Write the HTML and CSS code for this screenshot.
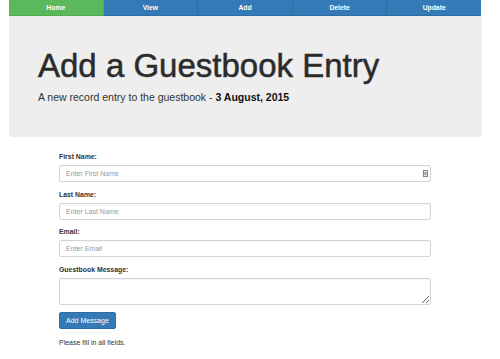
FILE: index.html
```html
<!DOCTYPE html>
<html lang="en">
<head>
<meta charset="utf-8">
<title>Add a Guestbook Entry</title>
<link rel="stylesheet" href="styles.css">
</head>
<body>
<div class="page">
  <nav class="nav">
    <a class="nav-item active" href="#">Home</a>
    <a class="nav-item" href="#">View</a>
    <a class="nav-item" href="#">Add</a>
    <a class="nav-item" href="#">Delete</a>
    <a class="nav-item" href="#">Update</a>
  </nav>
  <header class="jumbotron">
    <h1 class="title">Add a Guestbook Entry</h1>
    <p class="lead">A new record entry to the guestbook - <strong>3 August, 2015</strong></p>
  </header>
</div>
<form class="form">
  <div class="group">
    <label class="label">First Name:</label>
    <div class="field-wrap">
      <input class="field" type="text" placeholder="Enter First Name">
      <svg class="field-icon" width="5" height="7" viewBox="0 0 5 7"><rect x="0.5" y="0.5" width="4" height="6" fill="#e6e6e6" stroke="#888" stroke-width="1"/><rect x="1.5" y="2" width="2" height="3" fill="#999"/></svg>
    </div>
  </div>
  <div class="group">
    <label class="label">Last Name:</label>
    <input class="field" type="text" placeholder="Enter Last Name">
  </div>
  <div class="group">
    <label class="label">Email:</label>
    <input class="field" type="text" placeholder="Enter Email">
  </div>
  <div class="group">
    <label class="label">Guestbook Message:</label>
    <textarea class="field area"></textarea>
  </div>
  <button class="btn" type="button">Add Message</button>
  <p class="note">Please fill in all fields.</p>
</form>
</body>
</html>
```
FILE: styles.css
```css
* { box-sizing: border-box; }
html, body { margin: 0; padding: 0; background: #fff; }
body {
  font-family: "Liberation Sans", Arial, Helvetica, sans-serif;
  color: #333;
}
.page {
  padding: 0 18px 0 9px;
}
.nav {
  display: flex;
  width: 472px;
  height: 16px;
}
.nav-item {
  flex: 1;
  display: flex;
  align-items: center;
  justify-content: center;
  background: #337ab7;
  border-right: 1px solid #2e6da4;
  border-bottom: 1px solid #2e6da4;
  color: #fff;
  font-size: 6.8px;
  font-weight: bold;
  text-decoration: none;
}
.nav-item:last-child { border-right: none; }
.nav-item.active {
  background: #5cb85c;
  border-color: #4cae4c;
}
.jumbotron {
  background: #eee;
  border-radius: 0 0 4px 4px;
  padding: 32px 29px 31px;
  height: 121px;
}
.title {
  margin: 0;
  font-size: 33px;
  line-height: 1.1;
  font-weight: normal;
  color: #2b2b2b;
  -webkit-text-stroke: 0.5px #2b2b2b;
}
.lead {
  margin: 6px 0 0;
  font-size: 10.5px;
  line-height: 15px;
  color: #333;
}
.lead strong { color: #111; }
.form {
  margin: 0 0 0 59px;
  width: 372px;
  padding-top: 15px;
}
.group {
  margin-bottom: 7.5px;
}
.label {
  display: block;
  font-size: 6.9px;
  font-weight: bold;
  line-height: 10px;
  margin-bottom: 3px;
  color: #333;
}
.field-wrap {
  position: relative;
}
.field {
  display: block;
  width: 100%;
  height: 17px;
  margin: 0;
  padding: 0 6px;
  border: 1px solid #d4d4d4;
  border-radius: 2px;
  background: #fff;
  font-family: "Liberation Sans", Arial, sans-serif;
  font-size: 7px;
  color: #555;
  box-shadow: inset 0 1px 1px rgba(0,0,0,0.04);
  outline: none;
}
.field::placeholder { color: #999; }
.field-icon {
  position: absolute;
  right: 3px;
  top: 5px;
}
.area {
  height: 27px;
  padding: 3px 6px;
  resize: vertical;
}
.btn {
  display: block;
  height: 17px;
  margin: 0;
  padding: 0 6px;
  background: #337ab7;
  border: 1px solid #2e6da4;
  border-radius: 2px;
  color: #fff;
  font-family: "Liberation Sans", Arial, sans-serif;
  font-size: 7px;
  line-height: 15px;
}
.note {
  margin: 9px 0 0;
  font-size: 7px;
  line-height: 10px;
  color: #333;
}
```
